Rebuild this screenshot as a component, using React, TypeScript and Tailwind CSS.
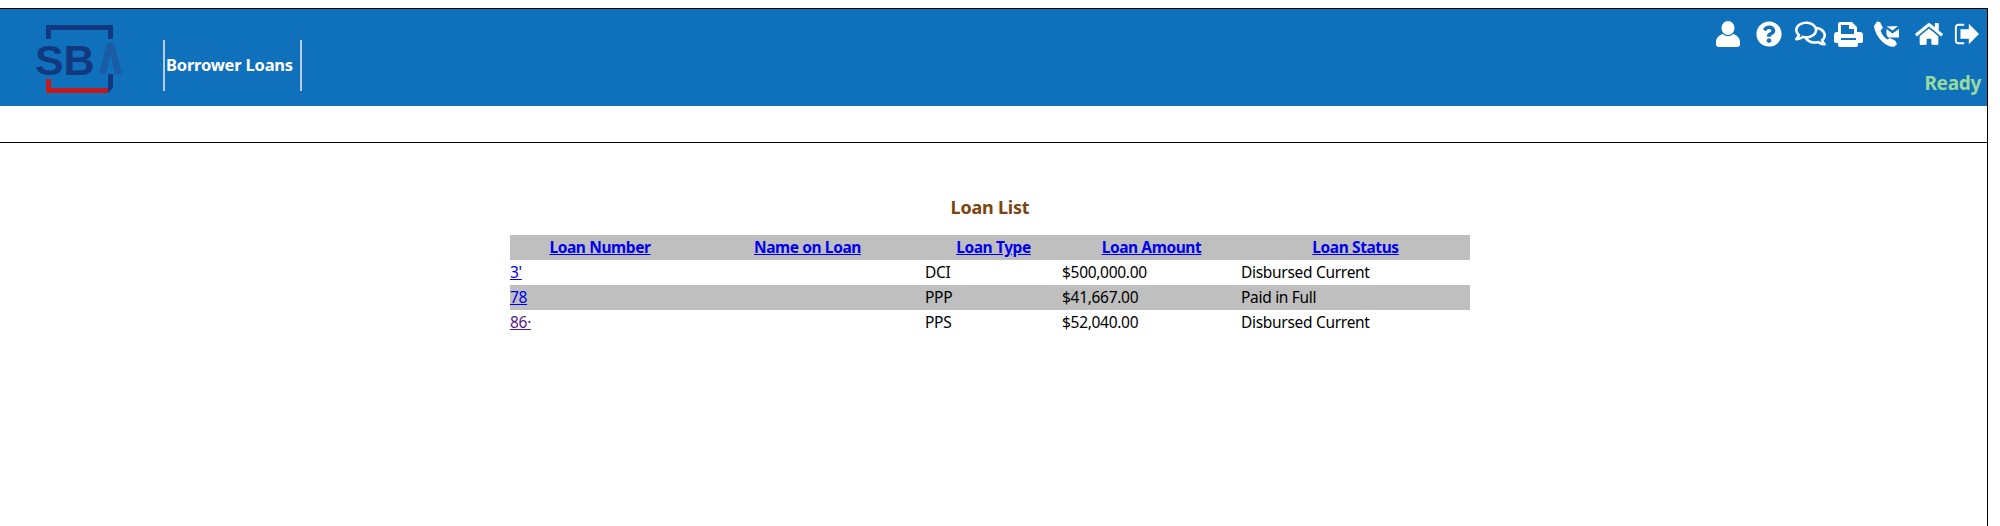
import { FaQuestionCircle, FaRegComments, FaHome } from "react-icons/fa";

const COLUMNS = ["Loan Number", "Name on Loan", "Loan Type", "Loan Amount", "Loan Status"];

const LOANS = [
  { number: "3'", type: "DCI", amount: "$500,000.00", status: "Disbursed Current", link: "text-[#0000ee]", shaded: false },
  { number: "78", type: "PPP", amount: "$41,667.00", status: "Paid in Full", link: "text-[#0000ee]", shaded: true },
  { number: "86·", type: "PPS", amount: "$52,040.00", status: "Disbursed Current", link: "text-[#551a8b]", shaded: false },
];

function SbaLogo() {
  return (
    <svg width="86" height="68" viewBox="0 0 86 68" className="block">
      <path d="M10 14V0h67v14h-5V5H15v9z" fill="#12387f" />
      <path d="M77 49v14l-5 5V49z" fill="#12387f" />
      <path d="M10 54h5v9h57v5H10z" fill="#c41a1c" />
      <path d="M71 18h7l8 31h-7l-4.500-19L70 49h-7z" fill="#1a5ca6" />
      <text x="-1" y="50" fontSize="43" fontWeight="700" fill="#12387f" fontFamily="Liberation Sans, sans-serif">SB</text>
    </svg>
  );
}

function UserIcon() {
  return (
    <svg width="24" height="26" viewBox="0 0 24 26" fill="white">
      <ellipse cx="12" cy="7" rx="6.500" ry="7" />
      <path d="M7 13c3 3 7 3 10 0 4 1 7 4 7 8v2a3 3 0 0 1-3 3H3a3 3 0 0 1-3-3v-2c0-4 3-7 7-8z" />
    </svg>
  );
}

function PrintIcon() {
  return (
    <svg width="29" height="26" viewBox="0 0 29 26" fill="white" fillRule="evenodd">
      <path d="M6 1h12l5 5v5h3a3 3 0 0 1 3 3v6a2 2 0 0 1-2 2h-3v2a2 2 0 0 1-2 2H6a2 2 0 0 1-2-2v-2H2a2 2 0 0 1-2-2v-6a3 3 0 0 1 3-3h1V3a2 2 0 0 1 2-2zm1 3v9h13V8h-5V4zM7 17v2h15v-2z" />
    </svg>
  );
}

function PhoneMailIcon() {
  return (
    <svg width="25" height="26" viewBox="0 0 25 26" fill="white">
      <path d="M3 0.500l3 0.500 3 6-2.500 2.500c1 3.500 3.500 7 7 9l2.500-1.500 5 2.500 2 3.500-2.500 2.500c-2 0.500-4 0-5.500-0.500C8 22 1 14 0 5z" />
      <path d="M12.500 5.500L24 5l-5.500 4.500zM12.500 8l6 4.500L25 8v8.500H14c-0.500-1-1-2-1.500-3z" />
    </svg>
  );
}

function SignOutIcon() {
  return (
    <svg width="25" height="24" viewBox="0 0 27 24" fill="white">
      <path d="M5 1h6v2H5a2 2 0 0 0-2 2v14a2 2 0 0 0 2 2h6v2H5a4 4 0 0 1-4-4V5a4 4 0 0 1 4-4z" />
      <path d="M16 1l11 11-11 11v-6H7V7h9z" />
    </svg>
  );
}

export default function App() {
  return (
    <div className="min-h-[526px] bg-white pt-2 font-['Noto_Sans',sans-serif] text-[15.500px] tracking-[-0.3px] text-black">
      <div className="mr-3 min-h-[518px] border-t border-r border-black">
        {/* Header */}
        <header className="flex h-[97px] justify-between bg-[#0f71bb] pr-[6px]">
          <div className="flex items-start">
            <div className="ml-9 mt-4">
              <SbaLogo />
            </div>
            <div className="ml-[41px] mt-[31px] flex h-[51px] items-center border-x-2 border-[#b9cde0] pl-[1px] pr-[7px] text-[16.500px] font-bold leading-none tracking-[-0.2px] text-white">
              Borrower Loans
            </div>
          </div>
          <div className="flex flex-col items-end">
            <div className="mt-[11px] mr-[2px] flex h-[27px] items-center text-white">
              <UserIcon />
              <FaQuestionCircle size={26} className="ml-4" />
              <FaRegComments size={31} className="ml-[13px]" />
              <span className="ml-2"><PrintIcon /></span>
              <span className="ml-[11px]"><PhoneMailIcon /></span>
              <FaHome size={28} className="ml-4" />
              <span className="ml-[11px]"><SignOutIcon /></span>
            </div>
            <div className="mt-[27px] text-[19px] font-bold leading-none tracking-[-0.3px] text-[#98da9f]">Ready</div>
          </div>
        </header>

        <div className="h-[37px] border-b border-black" />

        {/* Loan list */}
        <main className="ml-[510px] w-[960px] pt-[51px]">
          <h2 className="mb-[14px] text-center text-[18px] leading-[27px] font-bold tracking-[-0.2px] text-[#7b4611]">Loan List</h2>
          <table className="w-full table-fixed border-collapse">
            <colgroup>
              <col className="w-[180px]" />
              <col className="w-[235px]" />
              <col className="w-[137px]" />
              <col className="w-[179px]" />
              <col className="w-[229px]" />
            </colgroup>
            <thead>
              <tr className="h-[25px] bg-[#bfbfbf]">
                {COLUMNS.map((col) => (
                  <th key={col} className="p-0 text-center font-bold tracking-[-0.4px]">
                    <a href="#" className="text-[#0000ee] underline">{col}</a>
                  </th>
                ))}
              </tr>
            </thead>
            <tbody>
              {LOANS.map((loan) => (
                <tr key={loan.number} className={loan.shaded ? "h-[25px] bg-[#bfbfbf]" : "h-[25px]"}>
                  <td className="p-0">
                    <a href="#" className={`${loan.link} underline`}>{loan.number}</a>
                  </td>
                  <td className="p-0" />
                  <td className="p-0">{loan.type}</td>
                  <td className="p-0">{loan.amount}</td>
                  <td className="p-0">{loan.status}</td>
                </tr>
              ))}
            </tbody>
          </table>
        </main>
      </div>
    </div>
  );
}
